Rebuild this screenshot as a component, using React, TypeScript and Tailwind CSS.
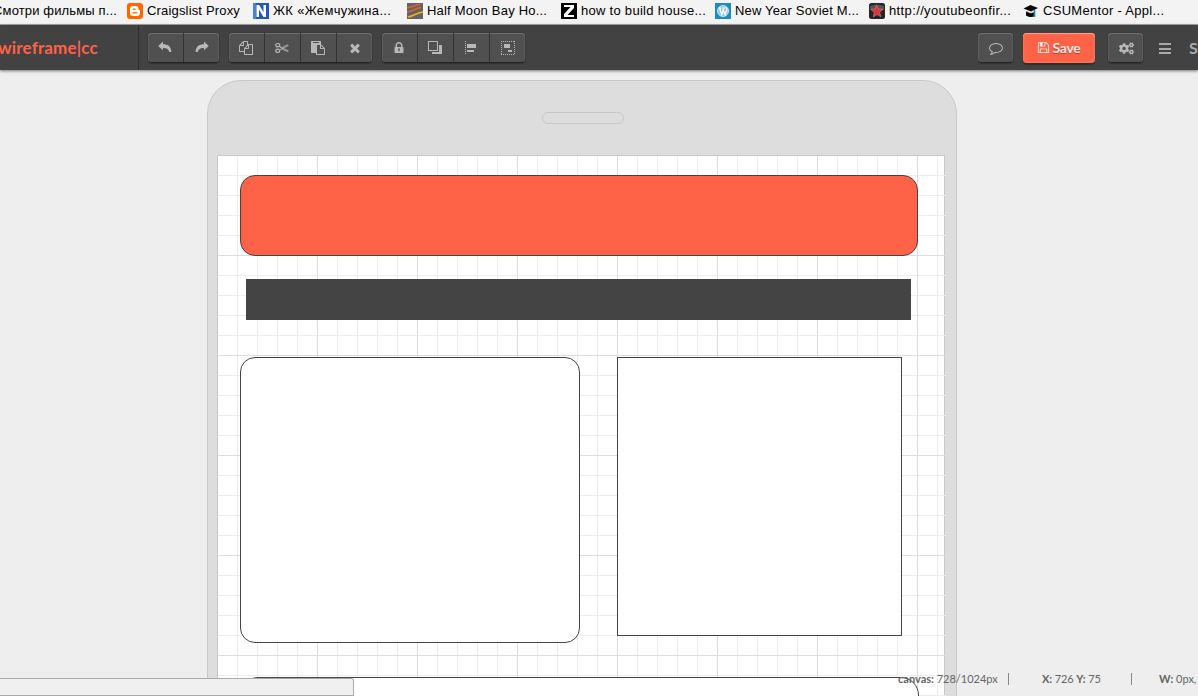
import type { ReactNode } from "react";
import { FaCogs } from "react-icons/fa";

const glyphs = {
  copy: "M1696 384q40 0 68 28t28 68v1216q0 40-28 68t-68 28h-960q-40 0-68-28t-28-68v-288h-544q-40 0-68-28t-28-68v-672q0-40 20-88t48-76l408-408q28-28 76-48t88-20h416q40 0 68 28t28 68v328q68-40 128-40h416zm-544 213l-299 299h299v-299zm-640-384l-299 299h299v-299zm196 647l316-316v-416h-384v416q0 40-28 68t-68 28h-416v640h512v-256q0-40 20-88t48-76zm956 804v-1152h-384v416q0 40-28 68t-68 28h-416v640h896z",
  paste: "M768 1664h896v-640h-416q-40 0-68-28t-28-68v-416h-384v1152zm256-1440v-64q0-13-9.5-22.5t-22.5-9.5h-704q-13 0-22.5 9.5t-9.5 22.5v64q0 13 9.5 22.5t22.5 9.5h704q13 0 22.5-9.5t9.5-22.5zm256 672h299l-299-299v299zm512 128v672q0 40-28 68t-68 28h-960q-40 0-68-28t-28-68v-160h-544q-40 0-68-28t-28-68v-1344q0-40 28-68t68-28h1088q40 0 68 28t28 68v328q21 13 36 28l408 408q28 28 48 76t20 88z",
  times: "M1490 1322q0 40-28 68l-136 136q-28 28-68 28t-68-28l-294-294-294 294q-28 28-68 28t-68-28l-136-136q-28-28-28-68t28-68l294-294-294-294q-28-28-28-68t28-68l136-136q28-28 68-28t68 28l294 294 294-294q28-28 68-28t68 28l136 136q28 28 28 68t-28 68l-294 294 294 294q28 28 28 68z",
  lock: "M640 768h512v-192q0-106-75-181t-181-75-181 75-75 181v192zm832 96v576q0 40-28 68t-68 28h-960q-40 0-68-28t-28-68v-576q0-40 28-68t68-28h32v-192q0-184 132-316t316-132 316 132 132 316v192h32q40 0 68 28t28 68z",
  save: "M512 1536h768v-384h-768v384zm896 0h128v-896q0-14-10-38.5t-20-34.5l-281-281q-10-10-34-20t-39-10v416q0 40-28 68t-68 28h-576q-40 0-68-28t-28-68v-416h-128v1280h128v-416q0-40 28-68t68-28h832q40 0 68 28t28 68v416zm-384-928v-320q0-13-9.5-22.5t-22.5-9.5h-192q-13 0-22.5 9.5t-9.5 22.5v320q0 13 9.5 22.5t22.5 9.5h192q13 0 22.5-9.5t9.5-22.5zm640 32v928q0 40-28 68t-68 28h-1344q-40 0-68-28t-28-68v-1344q0-40 28-68t68-28h928q40 0 88 20t76 48l280 280q28 28 48 76t20 88z",
  comment: "M896 384q-204 0-381.5 69.5t-282 187.5-104.5 255q0 112 71.5 213.5t201.5 175.5l87 50-27 96q-24 91-70 172 152-63 275-171l43-38 57 6q69 8 130 8 204 0 381.5-69.5t282-187.5 104.5-255-104.5-255-282-187.5-381.5-69.5zm896 512q0 174-120 321.5t-326 233-450 85.5q-70 0-145-8-198 175-460 242-49 14-114 22h-5q-15 0-27-10.5t-16-27.5v-1q-3-4-.5-12t2-10 4.5-9.5l6-9 7-8.5 8-9q7-8 31-34.5t34.5-38 31-39.5 32.5-51 27-59 26-76q-157-89-247.5-220t-90.5-281q0-174 120-321.5t326-233 450-85.5 450 85.5 326 233 120 321.5z",
};

function Glyph({ name, className = "size-[14px]" }: { name: keyof typeof glyphs; className?: string }) {
  return (
    <svg viewBox="0 0 1792 1792" fill="currentColor" className={className}>
      <path d={glyphs[name]} />
      {name === "lock" && <path d="M896 930a110 110 0 0 1 60 200v220h-120v-220a110 110 0 0 1 60-200z" fill="#444" />}
    </svg>
  );
}

function Undo({ className = "" }: { className?: string }) {
  return (
    <svg viewBox="0 0 14 12" fill="currentColor" className={`h-3 w-3.5 -translate-y-px ${className}`}>
      <path d="M.2 4.9 5 .6v2.6c5 0 8.3 2.2 8.4 7.9h-2.2C10.7 8.3 9 6.9 5 6.9v2.4z" />
    </svg>
  );
}

function Scissors() {
  return (
    <svg viewBox="0 0 14 14" fill="none" stroke="currentColor" className="size-[14px]">
      <ellipse cx="2.8" cy="4.2" rx="2" ry="1.7" strokeWidth="1.2" />
      <ellipse cx="2.8" cy="9.8" rx="2" ry="1.7" strokeWidth="1.2" />
      <path d="M4.5 5.2 7 6.7l5-2.9 1.3.7L4.6 9M4.500 5.200l2.200 2.600 5.300 2.700 1.300-.7L7 6.700" strokeWidth=".8" />
    </svg>
  );
}

function Layers() {
  return (
    <svg viewBox="0 0 14 14" fill="currentColor" className="size-[14px]" shapeRendering="crispEdges">
      <path d="M0 0h10v10H0zM1 1v8h8V1z" fillRule="evenodd" />
      <path d="M11 4h3v9H4v-2h7z" />
    </svg>
  );
}

function AlignLeft() {
  return (
    <svg viewBox="0 0 13 14" fill="currentColor" className="h-[14px] w-[13px]" shapeRendering="crispEdges">
      <path d="M.5 0v14" stroke="currentColor" strokeDasharray="1 1" />
      <path d="M2 3h9v4H2zM2 9h7v2H2z" />
    </svg>
  );
}

function GroupIcon() {
  return (
    <svg viewBox="0 0 14 14" fill="currentColor" className="size-[14px]" shapeRendering="crispEdges">
      <path d="M0 .5h14M0 13.500h14M.5 0v14M13.500 0v14" stroke="currentColor" strokeDasharray="1 1" />
      <path d="M3 3h6v4H3zM7 9h4v2H7z" />
    </svg>
  );
}

function ButtonGroup({ items }: { items: ReactNode[] }) {
  return (
    <div className="flex h-[29px] rounded-[4px] bg-[#505050] text-[#b8b8b8] shadow-[inset_0_1px_0_#707070,inset_1px_0_0_#5c5c5c,inset_-1px_0_0_#5c5c5c,0_1px_0_#252525,0_0_0_1px_#3a3a3a,0_2px_1px_#343434]">
      {items.map((item, i) => (
        <div
          key={i}
          className="flex w-9 items-center justify-center border-r border-[#333] pt-px pr-px last:w-[35px] last:border-r-0 last:pr-0 last:pl-px"
        >
          {item}
        </div>
      ))}
    </div>
  );
}

const bookmarks = [
  {
    label: "Craigslist Proxy",
    track: "tracking-[0.17px]",
    width: "w-[126px]",
    icon: (
      <>
        <rect width="16" height="16" rx="3" fill="#f60" />
        <path d="M6 3h2.500a3 3 0 0 1 3 3c0 1 .2 1 .9 1 .5 0 .6.3.6.6V10a3 3 0 0 1-3 3H6a3 3 0 0 1-3-3V6a3 3 0 0 1 3-3z" fill="#fff" />
        <path d="M6 6.200h2.200M6 9.800h4" stroke="#f60" strokeWidth="1.300" strokeLinecap="round" />
      </>
    ),
  },
  {
    label: "ЖК «Жемчужина...",
    track: "tracking-[0.32px]",
    width: "w-[154px]",
    icon: (
      <>
        <rect width="16" height="16" fill="#2455b8" />
        <path d="M0 0h3v16H0z" fill="#4c80d8" />
        <path d="M3.500 14V2h2.700l4.300 7.300V2H13v12h-2.500L6 6.500V14z" fill="#fff" />
      </>
    ),
  },
  {
    label: "Half Moon Bay Ho...",
    track: "tracking-[0.2px]",
    width: "w-[154px]",
    icon: (
      <>
        <rect width="16" height="16" fill="#656462" />
        <path d="M0 4.500C5 5 8 1.500 13 1.500M0 9c5 0 8-4 14-4.500" stroke="#e5602d" strokeWidth="1.500" fill="none" />
        <path d="M1 14c5-1 8-4 15-5" stroke="#f5ad20" strokeWidth="1.700" fill="none" />
      </>
    ),
  },
  {
    label: "how to build house...",
    track: "tracking-[0.28px]",
    width: "w-[154px]",
    icon: (
      <>
        <rect width="16" height="16" fill="#000" />
        <path d="M3 2h10v3l-6.500 7H13v2H3v-3l6.500-7H3z" fill="#fff" />
      </>
    ),
  },
  {
    label: "New Year Soviet M...",
    track: "tracking-[0.17px]",
    width: "w-[154px]",
    icon: (
      <>
        <rect width="16" height="16" fill="#1e8cbe" />
        <circle cx="8" cy="8" r="5.500" fill="#8fc8e3" stroke="#e8f5fb" strokeWidth=".8" />
        <path d="M3.500 5h2.500M7 5h3M4.500 5l2.300 6.500L8.200 7 10 11.500 11.800 6.500 11 4" stroke="#fff" strokeWidth="1.200" fill="none" />
      </>
    ),
  },
  {
    label: "http://youtubeonfir...",
    track: "tracking-[0.37px]",
    width: "w-[154px]",
    icon: (
      <>
        <rect width="16" height="16" rx="2.500" fill="#252525" />
        <path d="M1 3q7-3 14 0v4H1z" fill="#555" />
        <path d="m7.500 2 1.900 4 4.600.3-3.300 3 1.200 4.500L8 11.500 4.300 14l.9-4.500L2 6.500l4.200-.6z" fill="#dc3438" stroke="#ef8588" strokeWidth=".5" />
      </>
    ),
  },
  {
    label: "CSUMentor - Appl...",
    track: "tracking-[0.3px]",
    width: "w-[154px]",
    icon: (
      <>
        <path d="m.5 5.500 7-3.500 7.500 3-7 3.500zM3 8l5 2 4-1.500V13c-3 2-6 1-9-.5z" fill="#080808" />
        <path d="M3 8.300 8 10l5-2" stroke="#eee" strokeWidth=".6" fill="none" />
        <path d="M11.500 7v7" stroke="#1687c5" strokeWidth="1.600" />
      </>
    ),
  },
];

function BookmarksBar() {
  return (
    <div className="flex h-[25px] shrink-0 items-center overflow-hidden border-b border-[#a5a8a7] bg-[#f3f3f3] pb-[3px] font-['Liberation_Sans',sans-serif] text-[13px] whitespace-nowrap text-black">
      <div className="flex w-[127px] shrink-0 justify-end pr-[10px] tracking-[0.14px]">Смотри фильмы п...</div>
      {bookmarks.map((b) => (
        <div key={b.label} className={`flex shrink-0 items-center gap-1 ${b.width} ${b.track}`}>
          <svg viewBox="0 0 16 16" className="size-4 shrink-0">{b.icon}</svg>
          {b.label}
        </div>
      ))}
    </div>
  );
}

function Toolbar() {
  return (
    <div className="relative z-10 flex h-[45px] shrink-0 overflow-visible bg-[#424242] shadow-[0_1px_3px_rgba(0,0,0,0.5)]">
      <div className="flex w-[139px] shrink-0 items-center border-r border-[#2c2c2c] text-[17px] font-bold tracking-[0.16px] whitespace-nowrap text-[#ff6347]">
        <span className="-ml-0.5">wireframe|cc</span>
      </div>
      <div className="flex gap-[10px] pt-2 pl-[9px]">
        <ButtonGroup items={[<Undo />, <Undo className="-scale-x-100" />]} />
        <ButtonGroup items={[<Glyph name="copy" />, <Scissors />, <Glyph name="paste" />, <Glyph name="times" />]} />
        <ButtonGroup items={[<Glyph name="lock" />, <Layers />, <AlignLeft />, <GroupIcon />]} />
      </div>
      <div className="ml-auto flex w-[220px] shrink-0 overflow-hidden pt-2 pb-1">
        <ButtonGroup items={[<Glyph name="comment" />]} />
        <div className="ml-[10px] flex h-[30px] w-[72px] items-center justify-center gap-1 rounded-[4px] bg-[#ff6347] pr-px pb-px text-[14px] font-bold text-[#f5e7e3] shadow-[inset_0_1px_0_#ff9c89,inset_0_0_3px_#ff8068,0_2px_1px_#303030] [text-shadow:0_1px_1px_#a84331]">
          <Glyph name="save" className="size-[13px]" />
          <span className="-ml-px tracking-[-0.3px]">Save</span>
        </div>
        <div className="ml-[13px]">
          <ButtonGroup items={[<FaCogs className="size-[15px]" />]} />
        </div>
        <div className="mt-[10px] ml-4 flex w-3 flex-col gap-[2.5px]">
          <i className="h-[2px] bg-[#aaa]" />
          <i className="h-[2px] bg-[#aaa]" />
          <i className="h-[2px] bg-[#aaa]" />
        </div>
        <div className="mt-[3px] ml-[18px] text-[16px] leading-6 font-bold text-[#aaa]">S</div>
      </div>
    </div>
  );
}

function Device() {
  return (
    <div className="mt-[10px] ml-[207px] h-[1200px] w-[750px] rounded-t-[34px] border border-[#c9c9c9] bg-[#ddd] pl-[9px]">
      <div className="mt-[31px] ml-[325px] h-3 w-[82px] rounded-full border border-[#c8c8c8]" />
      <div className="relative mt-[31px] h-[1024px] w-[728px] border border-[#c8c8c8] bg-white">
        <div className="absolute -top-px -left-px h-full w-[729px] bg-[linear-gradient(to_right,#dedede_1px,transparent_1px),linear-gradient(to_bottom,#dedede_1px,transparent_1px),linear-gradient(to_right,#ededed_1px,transparent_1px),linear-gradient(to_bottom,#ededed_1px,transparent_1px)] bg-[size:100px_100px,100px_100px,20px_20px,20px_20px]" />
        <div className="absolute -top-px -left-px h-full w-px bg-[#c8c8c8]" />
        <div className="absolute -top-px -left-px h-px w-[728px] bg-[#c8c8c8]" />
        <div className="absolute top-[19px] left-[22px] h-[81px] w-[678px] rounded-[15px] border border-[#444] bg-[#ff6347]" />
        <div className="absolute top-[123px] left-[28px] h-[41px] w-[665px] bg-[#444]" />
        <div className="absolute top-[201px] left-[22px] h-[286px] w-[340px] rounded-[15px] border border-[#444] bg-white" />
        <div className="absolute top-[201px] left-[399px] h-[279px] w-[285px] border border-[#444] bg-white" />
        <div className="absolute top-[521px] left-[22px] h-[200px] w-[679px] rounded-[18px] border border-[#444] bg-white" />
      </div>
    </div>
  );
}

export default function App() {
  return (
    <div className="relative flex h-[696px] w-[1198px] flex-col overflow-hidden bg-[#eee] font-[Lato,sans-serif]">
      <BookmarksBar />
      <Toolbar />
      <div className="min-h-0 flex-1 overflow-hidden">
        <Device />
      </div>
      <div className="absolute bottom-0 left-0 h-[18px] w-[354px] rounded-tr-[3px] border border-l-0 border-[#aaa] bg-[#f0f0f0]" />
      <div className="absolute right-0 bottom-[10px] flex h-[14px] w-[300px] items-center overflow-hidden text-[11px] whitespace-nowrap text-[#666]">
        <span className="w-[110px] shrink-0"><b>canvas:</b> 728/1024px</span>
        <span className="h-3 w-px shrink-0 bg-[#888]" />
        <span className="ml-[33px] w-[89px] shrink-0 tracking-[-0.1px]"><b>X:</b> 726 <b>Y:</b> 75</span>
        <span className="h-3 w-px shrink-0 bg-[#888]" />
        <span className="ml-[27px] shrink-0"><b>W:</b> 0px,</span>
      </div>
    </div>
  );
}
